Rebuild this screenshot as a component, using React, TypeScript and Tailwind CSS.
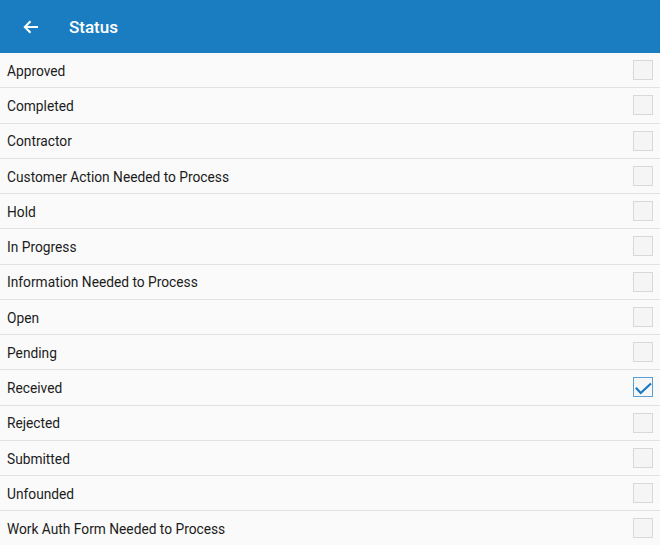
import React from "react";

const items = [
  "Approved",
  "Completed",
  "Contractor",
  "Customer Action Needed to Process",
  "Hold",
  "In Progress",
  "Information Needed to Process",
  "Open",
  "Pending",
  "Received",
  "Rejected",
  "Submitted",
  "Unfounded",
  "Work Auth Form Needed to Process",
];

function Box({ checked }: { checked: boolean }) {
  if (checked) {
    return (
      <div className="w-[20px] h-[20px] border-[1.5px] border-[#5a9fd6] bg-[#f7f7f7] flex items-center justify-center">
        <svg width="20" height="20" viewBox="0 0 20 20" className="-m-[1.5px]">
          <path d="M3.6 11.6 L7.7 16 L17.2 7.2" fill="none" stroke="#1a79c0" strokeWidth="2.2" strokeLinecap="square" />
        </svg>
      </div>
    );
  }
  return <div className="w-[20px] h-[20px] border-[1.5px] border-[#d8d8d8] bg-[#f5f5f5]" />;
}

export default function App() {
  return (
    <div className="w-[660px] h-[545px] overflow-hidden bg-[#fafafa]" style={{ fontFamily: "Roboto, 'Liberation Sans', sans-serif" }}>
      <div className="h-[53px] bg-[#1a7dc2] flex items-center">
        <svg width="16" height="16" viewBox="0 0 16 16" className="ml-[23px] mt-[1px]">
          <path d="M15 8 H2 M7.5 2.3 L1.8 8 L7.5 13.7" fill="none" stroke="white" strokeWidth="2" />
        </svg>
        <span className="ml-[30px] text-white text-[17px] font-medium mt-[2px]">Status</span>
      </div>
      {items.map((t) => (
        <div key={t} className="h-[35.25px] box-border border-b border-[#e2e2e2] flex items-center justify-between pl-[7px] pr-[7px]">
          <span className="text-[13.75px] text-[#1c1c1c] mt-[2px]">{t}</span>
          <Box checked={t === "Received"} />
        </div>
      ))}
    </div>
  );
}
